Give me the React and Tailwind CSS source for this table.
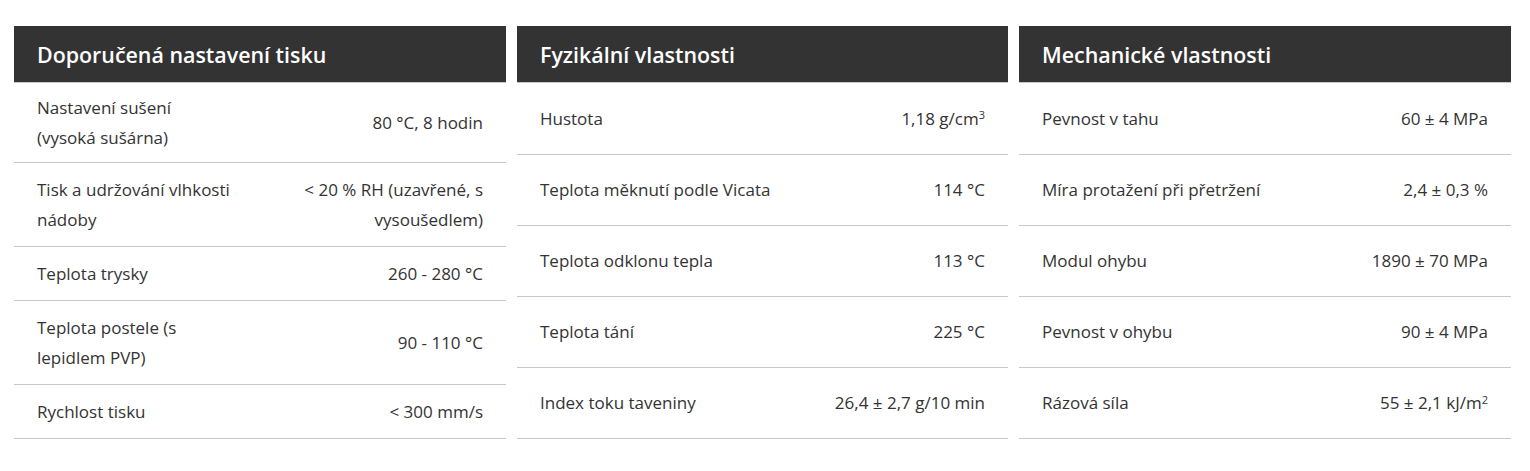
const tables = [
  {
    title: 'Doporučená nastavení tisku',
    width: 'w-[492px]',
    rows: [
      [<>Nastavení sušení<br />(vysoká sušárna)</>, '80 °C, 8 hodin', 'h-[80px]'],
      [<>Tisk a udržování vlhkosti<br />nádoby</>, <>&lt; 20 % RH (uzavřené, s<br />vysoušedlem)</>, 'h-[84px]'],
      ['Teplota trysky', '260 - 280 °C', 'h-[54px]'],
      [<>Teplota postele (s<br />lepidlem PVP)</>, '90 - 110 °C', 'h-[84px]'],
      ['Rychlost tisku', '< 300 mm/s', 'h-[54px]'],
    ],
  },
  {
    title: 'Fyzikální vlastnosti',
    width: 'w-[491px]',
    rows: [
      ['Hustota', <>1,18 g/cm<sup className="text-[11px]">3</sup></>, 'h-[72px]'],
      ['Teplota měknutí podle Vicata', '114 °C', 'h-[71px]'],
      ['Teplota odklonu tepla', '113 °C', 'h-[71px]'],
      ['Teplota tání', '225 °C', 'h-[71px]'],
      ['Index toku taveniny', '26,4 ± 2,7 g/10 min', 'h-[71px]'],
    ],
  },
  {
    title: 'Mechanické vlastnosti',
    width: 'w-[492px]',
    rows: [
      ['Pevnost v tahu', '60 ± 4 MPa', 'h-[72px]'],
      ['Míra protažení při přetržení', '2,4 ± 0,3 %', 'h-[71px]'],
      ['Modul ohybu', '1890 ± 70 MPa', 'h-[71px]'],
      ['Pevnost v ohybu', '90 ± 4 MPa', 'h-[71px]'],
      ['Rázová síla', <>55 ± 2,1 kJ/m<sup className="text-[11px]">2</sup></>, 'h-[71px]'],
    ],
  },
];

function SpecTable({ title, rows, width }) {
  return (
    <div className={width}>
      <div className="h-[57px] bg-[#333333] border-b border-[#c8c8c8] flex items-center px-[23px] pt-[3px]">
        <h3 className="text-white text-[21.4px] font-semibold">{title}</h3>
      </div>
      {rows.map(([label, value, h], i) => (
        <div key={i} className={`${h} border-b border-[#c8c8c8] flex items-center justify-between gap-4 px-[23px]`}>
          <div className="leading-[30px]">{label}</div>
          <div className="text-right leading-[30px] whitespace-nowrap">{value}</div>
        </div>
      ))}
    </div>
  );
}

export default function App() {
  return (
    <div className="bg-white w-[1530px] h-[471px] pt-[26px] pl-[14px] text-[17px] text-[#333333]" style={{ fontFamily: '"Open Sans", sans-serif' }}>
      <div className="flex gap-[11px]">
        {tables.map((t, i) => (
          <SpecTable key={i} {...t} />
        ))}
      </div>
    </div>
  );
}
